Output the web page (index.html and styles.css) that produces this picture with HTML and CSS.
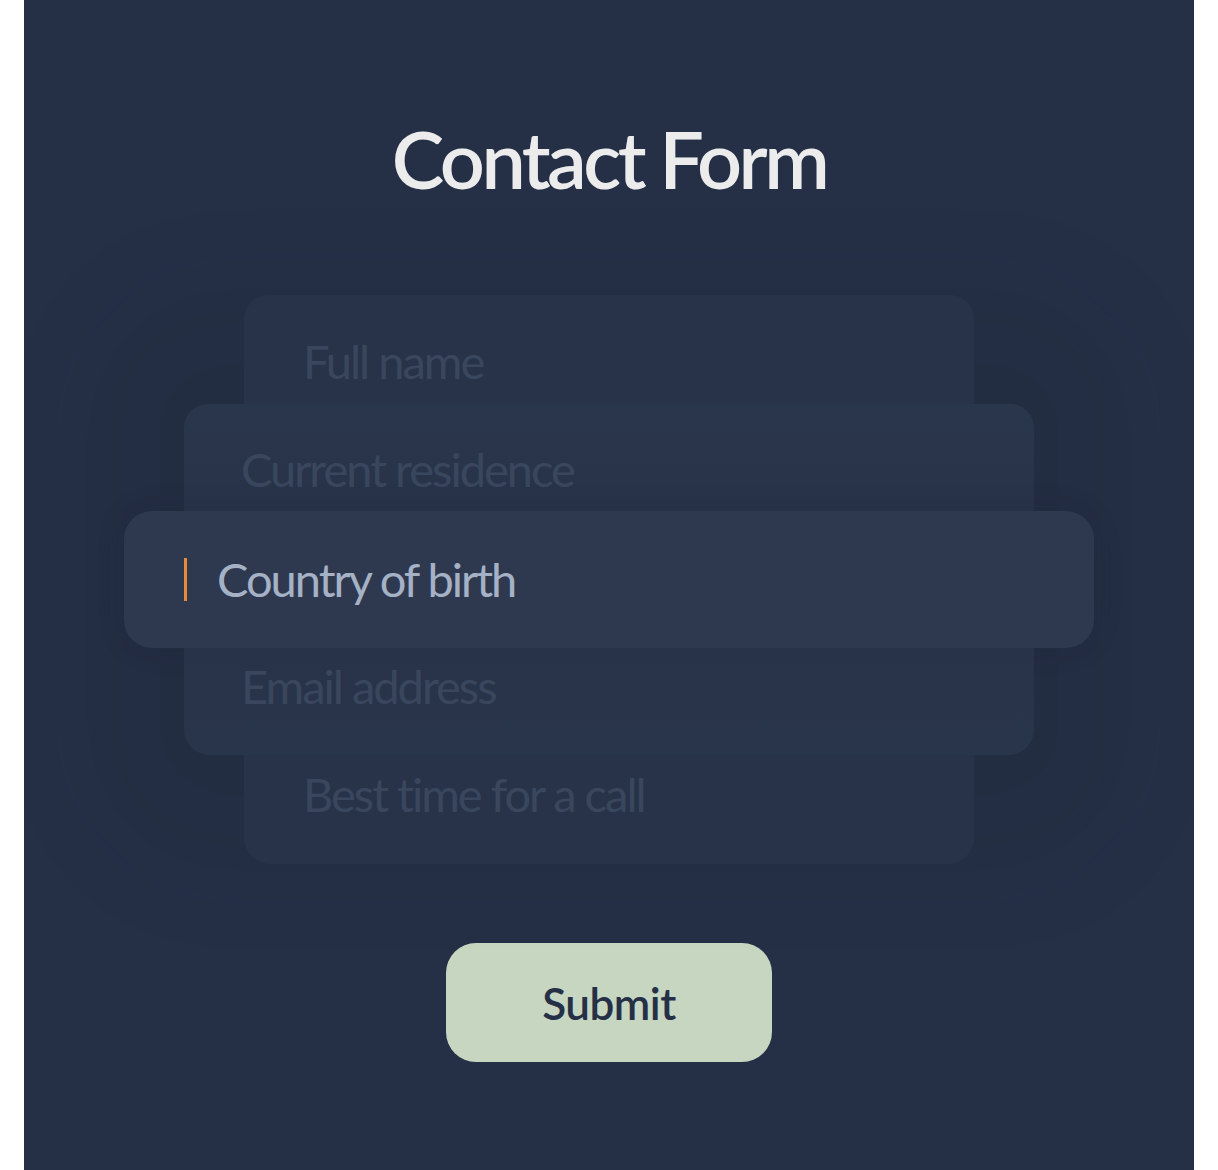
FILE: index.html
```html
<!DOCTYPE html>
<html>
<head>
    <link rel="stylesheet" href="styles.css">
</head>
<body>
    <div class="panel">
        <h1 class="title">Contact Form</h1>

        <div class="picker">
            <div class="field far top"><span class="label">Full name</span></div>
            <div class="field near top"><span class="label">Current residence</span></div>
            <div class="field active">
                <span class="caret"></span>
                <span class="label">Country of birth</span>
            </div>
            <div class="field near bottom"><span class="label">Email address</span></div>
            <div class="field far bottom"><span class="label">Best time for a call</span></div>
        </div>

        <button class="submit" type="button">Submit</button>
    </div>
</body>
</html>
```

FILE: styles.css
```css
/* Contact form - wheel picker */
body {
    margin: 0;
    background-color: #fff;
    font-family: Lato, "Noto Sans", sans-serif;
}

.panel {
    max-width: 1170px;
    min-height: 1170px;
    margin: 0 auto;
    background-color: #253047;
    display: flex;
    flex-direction: column;
    align-items: center;
    padding-top: 113px;
    box-sizing: border-box;
    overflow: hidden;
}

.title {
    margin: 0;
    color: #ececec;
    font-size: 79px;
    font-weight: 600;
    line-height: 92px;
    letter-spacing: -3.5px;
}

.picker {
    margin-top: 90px;
    width: 970px;
    display: flex;
    flex-direction: column;
    align-items: center;
    position: relative;
}

/* soft glow behind the wheel */
.picker::before {
    content: "";
    position: absolute;
    top: -10px;
    bottom: -10px;
    left: -40px;
    right: -40px;
    border-radius: 140px;
    background-color: rgba(15, 22, 34, 0.1);
    filter: blur(40px);
}

.field {
    display: flex;
    align-items: center;
    box-sizing: border-box;
    font-size: 47px;
    line-height: 1;
    letter-spacing: -2px;
    color: #3a465d;
    position: relative;
}

.far {
    width: 730px;
    height: 109px;
    padding-left: 59px;
    background-color: #28334a;
}

.near {
    width: 850px;
    height: 107px;
    padding-left: 57px;
    background: linear-gradient(#2a364c, #28334a);
}

.top {
    border-radius: 24px 24px 0 0;
    padding-top: 24px;
}

.bottom {
    border-radius: 0 0 26px 26px;
    padding-bottom: 30px;
}

.near.bottom {
    background: linear-gradient(#28334a, #29354b);
}

.active {
    width: 970px;
    height: 137px;
    padding-left: 60px;
    border-radius: 28px;
    background-color: #2e3950;
    color: #a5b2c6;
    box-shadow: 0 0 30px rgba(20, 28, 42, 0.12);
}

.caret {
    width: 3px;
    height: 43px;
    margin-right: 30px;
    background-color: #e88a3a;
}

.submit {
    margin-top: 79px;
    width: 326px;
    height: 119px;
    border: none;
    border-radius: 30px;
    background-color: #c6d6c1;
    color: #253047;
    font-family: Lato, "Noto Sans", sans-serif;
    font-size: 44px;
    font-weight: 600;
    letter-spacing: -0.5px;
    cursor: pointer;
}
```
